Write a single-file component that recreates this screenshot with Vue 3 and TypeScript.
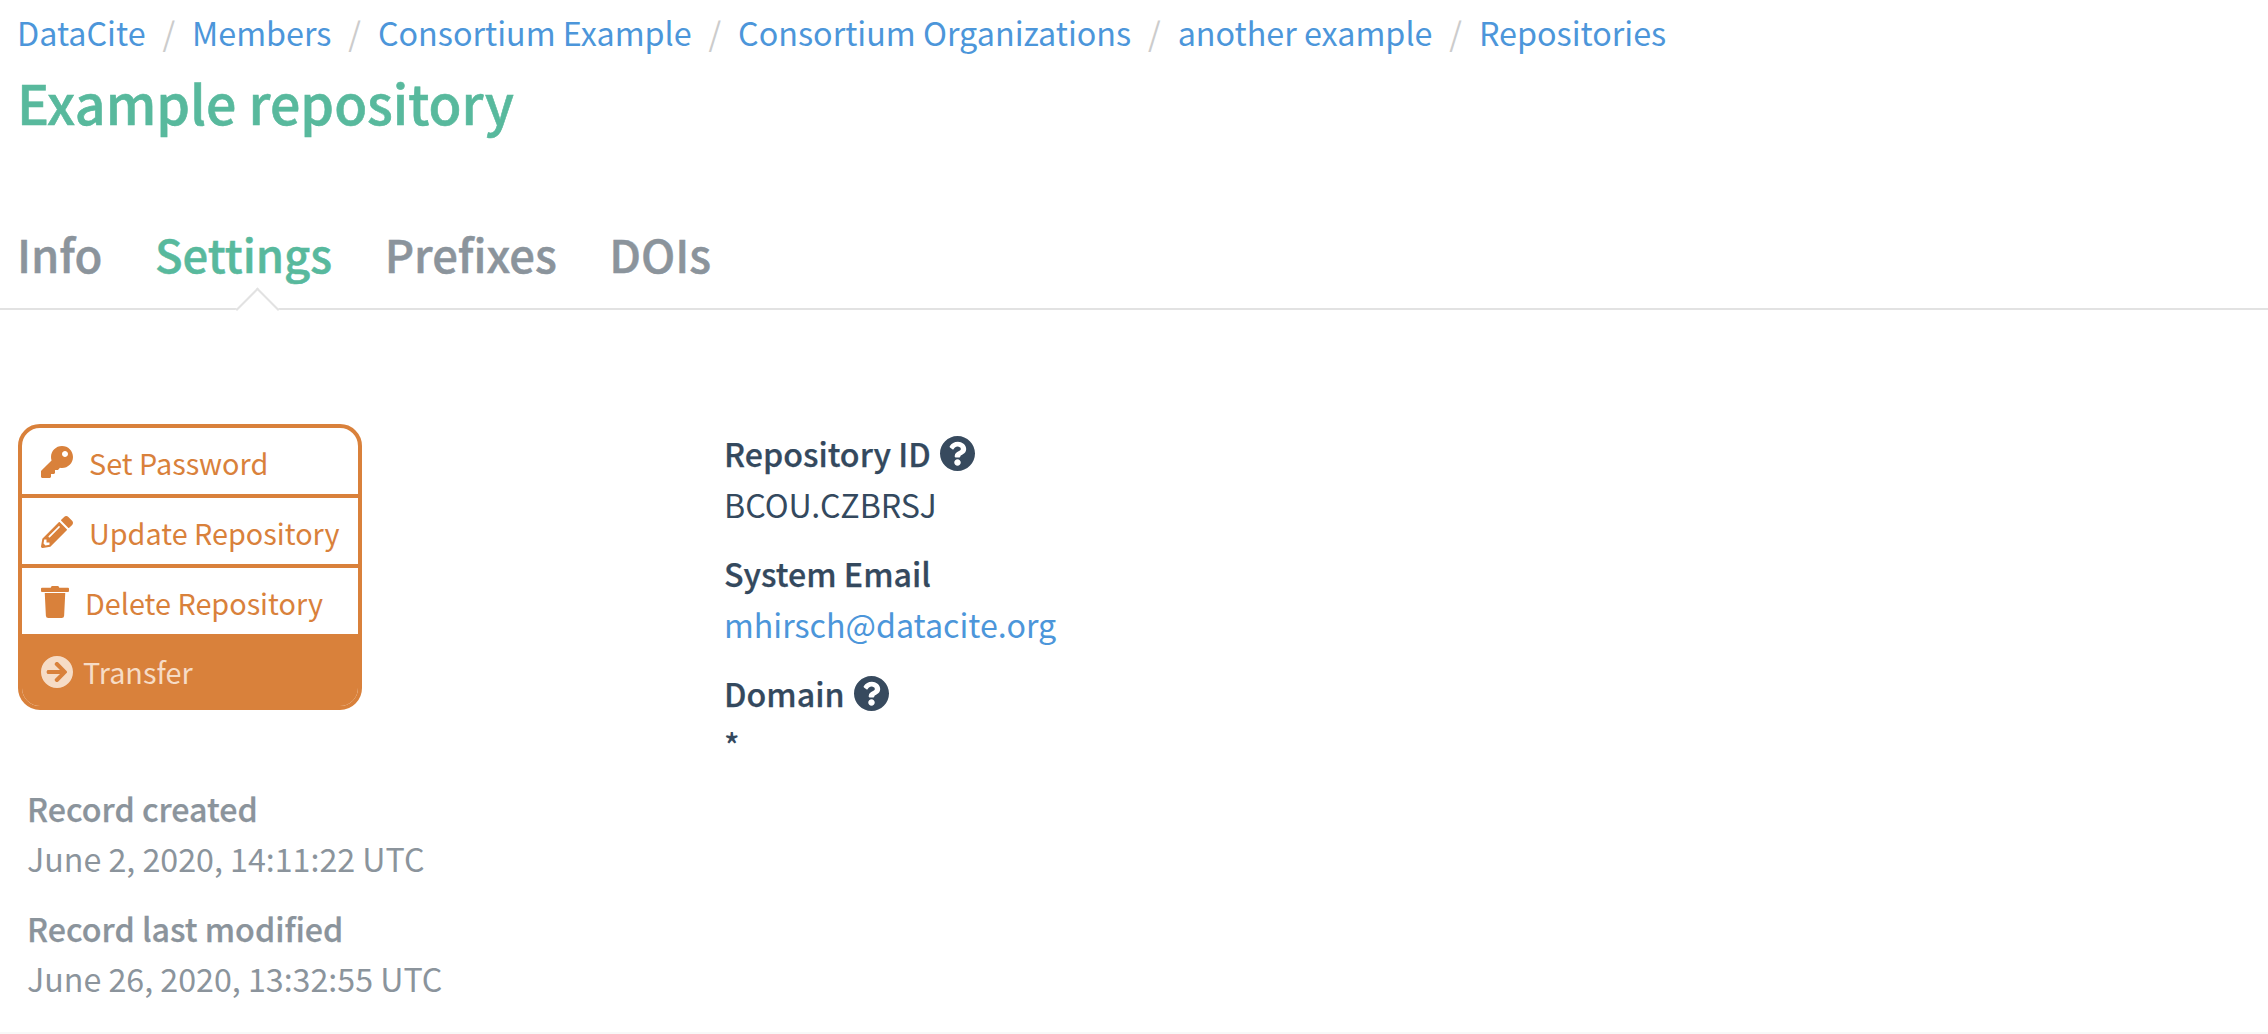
<template>
  <div class="page">
    <nav class="breadcrumb">
      <template v-for="(crumb, i) in crumbs" :key="crumb">
        <span v-if="i > 0" class="slash">/</span>
        <a class="crumb">{{ crumb }}</a>
      </template>
    </nav>
    <h1 class="title">Example repository</h1>

    <ul class="tabs">
      <li v-for="tab in tabs" :key="tab" class="tab" :class="{ active: tab === 'Settings' }">{{ tab }}</li>
    </ul>

    <div class="content">
      <aside class="side">
        <div class="actions">
          <a v-for="action in actions" :key="action.label" class="action" :class="{ filled: action.filled }">
            <svg class="action-icon" :class="action.iconClass" :viewBox="action.box"><path :d="action.path" /></svg>
            <span class="action-text" :class="action.textClass">{{ action.label }}</span>
          </a>
        </div>
        <div class="meta">
          <div v-for="item in meta" :key="item.label" class="meta-item">
            <div class="meta-label">{{ item.label }}</div>
            <div>{{ item.value }}</div>
          </div>
        </div>
      </aside>

      <section class="fields">
        <div class="field">
          <div class="field-label">Repository ID <svg class="help" viewBox="8 8 496 496"><path :d="helpPath" /></svg></div>
          <div>BCOU.CZBRSJ</div>
        </div>
        <div class="field">
          <div class="field-label">System Email</div>
          <a class="email">mhirsch@datacite.org</a>
        </div>
        <div class="field">
          <div class="field-label">Domain <svg class="help" viewBox="8 8 496 496"><path :d="helpPath" /></svg></div>
          <div class="domain">*</div>
        </div>
      </section>
    </div>
    <div class="footer-edge"></div>
  </div>
</template>

<script setup lang="ts">
const crumbs = ['DataCite', 'Members', 'Consortium Example', 'Consortium Organizations', 'another example', 'Repositories']
const tabs = ['Info', 'Settings', 'Prefixes', 'DOIs']

const helpPath =
  'M504 256c0 136.997-111.043 248-248 248S8 392.997 8 256C8 119.083 119.043 8 256 8s248 111.083 248 248zM262.655 90c-54.497 0-89.255 22.957-116.549 63.758-3.536 5.286-2.353 12.415 2.715 16.258l34.699 26.31c5.205 3.947 12.621 3.008 16.665-2.122 17.864-22.658 30.113-35.797 57.303-35.797 20.429 0 45.698 13.148 45.698 32.958 0 14.976-12.363 22.667-32.534 33.976C247.128 238.528 216 254.941 216 296v4c0 6.627 5.373 12 12 12h56c6.627 0 12-5.373 12-12v-1.333c0-28.462 83.186-29.647 83.186-106.667 0-58.002-60.165-102-116.531-102zM256 338c-25.365 0-46 20.635-46 46 0 25.364 20.635 46 46 46s46-20.636 46-46c0-25.365-20.635-46-46-46z'

const actions = [
  {
    label: 'Set Password',
    box: '0 0 512 512',
    iconClass: '',
    textClass: '',
    filled: false,
    path: 'M512 176.001C512 273.203 433.202 352 336 352c-11.22 0-22.19-1.062-32.827-3.069l-24.012 27.014A23.999 23.999 0 0 1 261.223 384H224v40c0 13.255-10.745 24-24 24h-40v40c0 13.255-10.745 24-24 24H24c-13.255 0-24-10.745-24-24v-78.059c0-6.365 2.529-12.47 7.029-16.971l161.802-161.802C163.108 213.814 160 195.271 160 176 160 78.798 238.797.001 335.999 0 433.488-.001 512 78.511 512 176.001zM336 128c0 26.51 21.49 48 48 48s48-21.49 48-48-21.49-48-48-48-48 21.49-48 48z'
  },
  {
    label: 'Update Repository',
    box: '0 0 512 512',
    iconClass: '',
    textClass: '',
    filled: false,
    path: 'M497.9 142.1l-46.1 46.1c-4.7 4.7-12.3 4.7-17 0l-111-111c-4.7-4.7-4.7-12.3 0-17l46.1-46.1c18.7-18.7 49.1-18.7 67.9 0l60.1 60.1c18.8 18.7 18.8 49.1 0 67.9zM284.2 99.8L21.6 362.4.4 483.9c-2.9 16.4 11.4 30.6 27.8 27.8l121.5-21.3 262.6-262.6c4.7-4.7 4.7-12.3 0-17l-111-111c-4.8-4.7-12.4-4.7-17.1 0zM124.1 339.9c-5.5-5.5-5.5-14.3 0-19.8l154-154c5.5-5.5 14.3-5.5 19.8 0s5.5 14.3 0 19.8l-154 154c-5.5 5.5-14.3 5.5-19.8 0zM88 424h48v36.3l-64.5 11.3-31.1-31.1L51.7 376H88v48z'
  },
  {
    label: 'Delete Repository',
    box: '0 0 448 512',
    iconClass: 'trash',
    textClass: '',
    filled: false,
    path: 'M432 28H292l-6-16A20 20 0 0 0 268 0H180a20 20 0 0 0-18 12l-6 16H16A16 16 0 0 0 0 44v36a16 16 0 0 0 16 16h416a16 16 0 0 0 16-16V44a16 16 0 0 0-16-16zM60 112l18 362a40 40 0 0 0 40 38h212a40 40 0 0 0 40-38l18-362z'
  },
  {
    label: 'Transfer',
    box: '8 8 496 496',
    iconClass: '',
    textClass: 'tight',
    filled: true,
    path: 'M256 8c137 0 248 111 248 248S393 504 256 504 8 393 8 256 119 8 256 8zm-28.9 143.6l75.5 72.4H120c-13.3 0-24 10.7-24 24v16c0 13.3 10.7 24 24 24h182.6l-75.5 72.4c-9.7 9.3-9.9 24.8-.4 34.3l11 10.9c9.4 9.4 24.6 9.4 33.9 0L404.3 273c9.4-9.4 9.4-24.6 0-33.9L271.6 106.3c-9.4-9.4-24.6-9.4-33.9 0l-11 10.9c-9.5 9.6-9.3 25.1.4 34.4z'
  }
]

const meta = [
  { label: 'Record created', value: 'June 2, 2020, 14:11:22 UTC' },
  { label: 'Record last modified', value: 'June 26, 2020, 13:32:55 UTC' }
]
</script>

<style>
html,
body {
  background: #fff;
}
</style>

<style scoped>
.page {
  height: 1034px;
  overflow: hidden;
  position: relative;
  font-family: "Noto Sans CJK JP", "Source Sans Pro", "Noto Sans", sans-serif;
  font-size: 32.2px;
  line-height: 50px;
  color: #34495e;
  background: #fff;
}

.breadcrumb {
  display: flex;
  padding: 7px 0 0 17px;
  height: 50px;
  font-size: 32.3px;
  line-height: 50px;
}

.crumb {
  color: #4c96da;
}

.slash {
  color: #ccc;
  padding: 0 16.9px;
}

.title {
  margin: 12px 0 0;
  padding-left: 17px;
  font-size: 53.7px;
  font-weight: 500;
  -webkit-text-stroke: 0.6px currentColor;
  line-height: 66px;
  color: #58b99d;
}

.tabs {
  display: flex;
  gap: 52.5px;
  list-style: none;
  margin: 76px 0 0;
  padding: 5px 0 0 17px;
  height: 92px;
  border-bottom: 2px solid #e2e2e2;
  position: relative;
}

.tab {
  font-size: 45.4px;
  font-weight: 500;
  -webkit-text-stroke: 0.5px currentColor;
  line-height: 74px;
  color: #8b949c;
  position: relative;
}

.tab.active {
  color: #58b99d;
}

.tab.active::after {
  content: "";
  position: absolute;
  left: calc(50% + 14px);
  bottom: -16.5px;
  width: 29px;
  height: 29px;
  margin-left: -15.5px;
  background: #fff;
  border: solid #e2e2e2;
  border-width: 2px 0 0 2px;
  transform: rotate(45deg);
}

.content {
  display: grid;
  grid-template-columns: 706px 1fr;
  padding: 114px 0 0 18px;
}

.actions {
  width: 344px;
  border: 4px solid #d9813b;
  border-radius: 22px;
  overflow: hidden;
  box-sizing: border-box;
  font-size: 28.8px;
}

.action {
  display: flex;
  align-items: center;
  height: 66px;
  padding-left: 19px;
  color: #d9813b;
  border-bottom: 4px solid #d9813b;
}

.action.filled {
  height: 72px;
  border-bottom: 0;
  margin-top: -4px;
  background: #d9813b;
  color: #f6dcc6;
}

.action-icon {
  width: 32px;
  height: 32px;
  margin-top: 2px;
  fill: currentColor;
  flex: none;
}

.action-icon.trash {
  width: 28px;
}

.filled .action-icon {
  margin-top: 4px;
}

.action-text {
  margin-left: 16px;
  padding-top: 4px;
}

.action-text.tight {
  margin-left: 10px;
}

.meta {
  margin: 73px 0 0 9px;
  color: #8b949c;
}

.meta-item + .meta-item {
  margin-top: 20px;
}

.meta-label {
  font-weight: 500;
  -webkit-text-stroke: 0.25px currentColor;
}

.fields {
  padding-top: 5px;
}

.field + .field {
  margin-top: 20px;
}

.field-label {
  display: flex;
  align-items: center;
  height: 48px;
  padding-bottom: 2px;
  line-height: 48px;
  font-weight: 500;
  -webkit-text-stroke: 0.25px currentColor;
}

.help {
  width: 35px;
  height: 35px;
  margin-left: 9px;
  fill: #374a5e;
}

.email {
  color: #4c96da;
  display: block;
}

.domain {
  font-weight: 500;
}

.footer-edge {
  position: absolute;
  left: 0;
  right: 0;
  bottom: 0;
  height: 2px;
  background: #f8f8f8;
}
</style>
